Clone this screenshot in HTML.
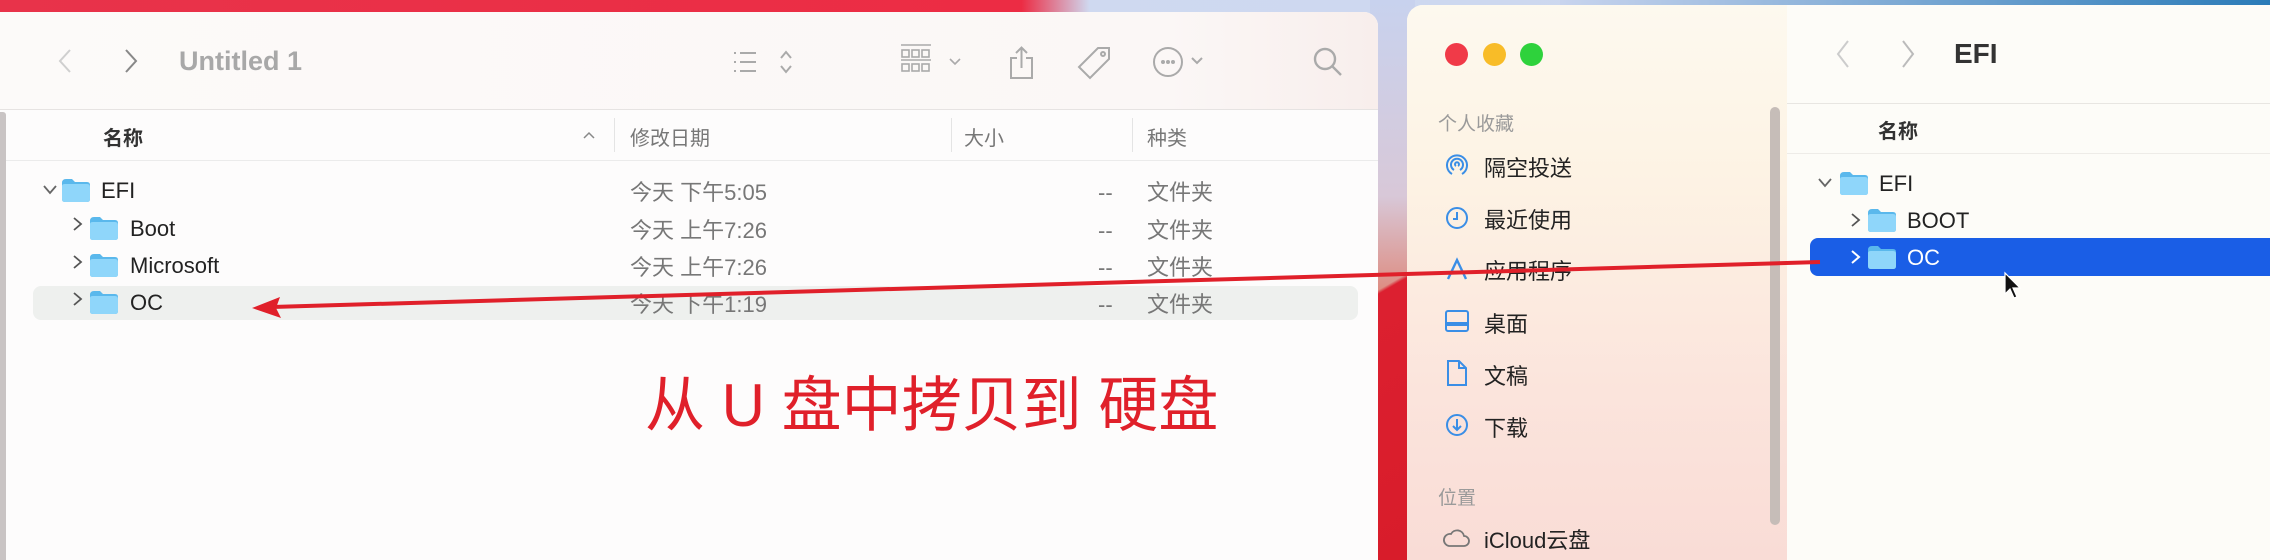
<!DOCTYPE html>
<html><head><meta charset="utf-8"><style>
*{margin:0;padding:0;box-sizing:border-box}
html,body{width:2270px;height:560px;overflow:hidden}
#w{position:relative;width:2270px;height:560px;overflow:hidden;font-family:"Liberation Sans","Noto Sans CJK SC",sans-serif;background:linear-gradient(90deg,#e8334a 0%,#ec2c44 45%,#cfd9f0 48%,#c9d6ee 100%)}
.a{position:absolute;white-space:nowrap}
.t{font-size:22px;color:#222}
.g{color:#777}
svg{position:absolute;overflow:visible}
</style></head><body><div id="w">
<div class="a" style="left:1370px;top:0;width:45px;height:560px;background:linear-gradient(180deg,#c8d2ee 0%,#d8c8d8 35%,#e07058 60%,#e02838 75%,#d8202c 100%)"></div>
<div class="a" style="left:1370px;top:170px;width:45px;height:390px;background:linear-gradient(150deg,transparent 0 30%,#dc2030 31%,#d81c2a 100%)"></div>
<div class="a" style="left:1560px;top:0;width:710px;height:10px;background:linear-gradient(90deg,#c8d4ee,#2a7bb8)"></div>

<div class="a" style="left:-20px;top:12px;width:1398px;height:548px;background:#fdfcfc;border-radius:14px 14px 0 0;overflow:hidden">
  <div class="a" style="left:0;top:0;width:1398px;height:98px;background:linear-gradient(90deg,#fcfaf9,#fbf7f6 85%,#f8eeec)"></div>
  <div class="a" style="left:0;top:97px;width:1398px;height:1px;background:#e6e3e2"></div>
  <div class="a" style="left:0;top:148px;width:1398px;height:1px;background:#ebebeb"></div>
</div>
<div class="a" style="left:0;top:112px;width:6px;height:448px;background:#c9c4c4;border-radius:0 3px 0 0"></div>
<svg style="left:58px;top:49px" width="14" height="24"><path d="M12 1 L2 12 L12 23" fill="none" stroke="#cfcfcf" stroke-width="2"/></svg>
<svg style="left:124px;top:49px" width="14" height="24"><path d="M2 1 L12 12 L2 23" fill="none" stroke="#888" stroke-width="2"/></svg>
<div class="a" style="left:179px;top:46px;font-size:27px;font-weight:bold;color:#a8a8a8">Untitled 1</div>
<svg style="left:732px;top:50px" width="60" height="24" fill="none" stroke="#aaa" stroke-width="2"><path d="M2 3h2M8 3h16M2 12h2M8 12h16M2 21h2M8 21h16M49 8l5-6 5 6M49 16l5 6 5-6"/></svg>
<svg style="left:900px;top:44px" width="70" height="34" fill="none" stroke="#aaa" stroke-width="1.6"><path d="M1 1h30"/><rect x="2" y="6" width="7" height="7"/><rect x="12" y="6" width="7" height="7"/><rect x="22" y="6" width="7" height="7"/><path d="M1 16h30"/><rect x="2" y="20" width="7" height="7"/><rect x="12" y="20" width="7" height="7"/><rect x="22" y="20" width="7" height="7"/><path d="M50 15l5 5 5-5"/></svg>
<svg style="left:1008px;top:46px" width="28" height="34" fill="none" stroke="#aaa" stroke-width="2"><path d="M9 12H3v20h21V12h-6M13.5 2v20M8 7l5.5-5.5L19 7"/></svg>
<svg style="left:1076px;top:46px" width="36" height="36" fill="none" stroke="#aaa" stroke-width="2"><path d="M22 2h11v11L14 32 3 21z"/><circle cx="27" cy="8" r="2"/></svg>
<svg style="left:1152px;top:46px" width="60" height="32" fill="none" stroke="#aaa" stroke-width="2"><circle cx="16" cy="16" r="14"/><path d="M40 12l5 5 5-5"/><circle cx="11" cy="16" r="1" fill="#999"/><circle cx="16" cy="16" r="1" fill="#999"/><circle cx="21" cy="16" r="1" fill="#999"/></svg>
<svg style="left:1312px;top:46px" width="32" height="32" fill="none" stroke="#aaa" stroke-width="2.4"><circle cx="13" cy="13" r="10"/><path d="M20 20l9 9"/></svg>
<div class="a" style="left:103px;top:122px;font-size:20px;font-weight:bold;color:#333">名称</div>
<svg style="left:583px;top:131px" width="12" height="8"><path d="M1 7l5-5 5 5" fill="none" stroke="#888" stroke-width="1.5"/></svg>
<div class="a" style="left:614px;top:118px;width:1px;height:34px;background:#e4e4e4"></div>
<div class="a" style="left:630px;top:122px;font-size:20px;color:#777">修改日期</div>
<div class="a" style="left:951px;top:118px;width:1px;height:34px;background:#e4e4e4"></div>
<div class="a" style="left:964px;top:122px;font-size:20px;color:#777">大小</div>
<div class="a" style="left:1132px;top:118px;width:1px;height:34px;background:#e4e4e4"></div>
<div class="a" style="left:1147px;top:122px;font-size:20px;color:#777">种类</div>
<div class="a" style="left:33px;top:286px;width:1325px;height:34px;background:#eef0ee;border-radius:8px"></div>
<svg width="0" height="0"><defs><g id="f"><path d="M0 5 Q0 1 4 1 H10 L13 4 H25 Q28 4 28 7 V21 Q28 24 25 24 H3 Q0 24 0 21Z" fill="#5ab8ec"/><path d="M0 8 Q0 6 3 6 H25 Q28 6 28 9 V21 Q28 24 25 24 H3 Q0 24 0 21Z" fill="#8fd6fa"/></g></defs></svg>
<svg style="left:43px;top:185px" width="14" height="10"><path d="M1 1l6 7 6-7" fill="none" stroke="#666" stroke-width="1.8"/></svg>
<svg style="left:62px;top:178px" width="28" height="26"><use href="#f"/></svg>
<div class="a t" style="left:101px;top:178px">EFI</div>
<svg style="left:73px;top:217px" width="10" height="14"><path d="M1 1l7 6-7 6" fill="none" stroke="#555" stroke-width="1.8"/></svg>
<svg style="left:90px;top:216px" width="28" height="26"><use href="#f"/></svg>
<div class="a t" style="left:130px;top:216px">Boot</div>
<svg style="left:73px;top:255px" width="10" height="14"><path d="M1 1l7 6-7 6" fill="none" stroke="#555" stroke-width="1.8"/></svg>
<svg style="left:90px;top:253px" width="28" height="26"><use href="#f"/></svg>
<div class="a t" style="left:130px;top:253px">Microsoft</div>
<svg style="left:73px;top:292px" width="10" height="14"><path d="M1 1l7 6-7 6" fill="none" stroke="#555" stroke-width="1.8"/></svg>
<svg style="left:90px;top:290px" width="28" height="26"><use href="#f"/></svg>
<div class="a t" style="left:130px;top:290px">OC</div>
<div class="a t g" style="left:630px;top:175px">今天 下午5:05</div>
<div class="a t g" style="left:630px;top:213px">今天 上午7:26</div>
<div class="a t g" style="left:630px;top:250px">今天 上午7:26</div>
<div class="a t g" style="left:630px;top:287px">今天 下午1:19</div>
<div class="a t g" style="left:1098px;top:180px">--</div><div class="a t g" style="left:1098px;top:218px">--</div><div class="a t g" style="left:1098px;top:255px">--</div><div class="a t g" style="left:1098px;top:292px">--</div>
<div class="a t g" style="left:1147px;top:175px">文件夹</div><div class="a t g" style="left:1147px;top:213px">文件夹</div><div class="a t g" style="left:1147px;top:250px">文件夹</div><div class="a t g" style="left:1147px;top:287px">文件夹</div>
<div class="a" style="left:645px;top:357px;font-size:60px;color:#e0202a">从 U 盘中拷贝到 硬盘</div>

<div class="a" style="left:1407px;top:5px;width:863px;height:555px;border-radius:16px 0 0 0;overflow:hidden;background:#fdfcf8">
  <div class="a" style="left:0;top:0;width:380px;height:555px;background:linear-gradient(180deg,#fdf9ef 0%,#fdf3e4 30%,#fbe4dc 70%,#f9dcd6 100%)"></div>
  <div class="a" style="left:380px;top:98px;width:600px;height:1px;background:#e8e6e2"></div>
  <div class="a" style="left:380px;top:148px;width:600px;height:1px;background:#eeece8"></div>
</div>
<div class="a" style="left:1445px;top:43px;width:23px;height:23px;border-radius:50%;background:#f03a48"></div>
<div class="a" style="left:1483px;top:43px;width:23px;height:23px;border-radius:50%;background:#f8bc28"></div>
<div class="a" style="left:1520px;top:43px;width:23px;height:23px;border-radius:50%;background:#2ed23c"></div>
<div class="a" style="left:1770px;top:107px;width:10px;height:418px;border-radius:5px;background:#c6bdb8"></div>
<div class="a" style="left:1438px;top:109px;font-size:19px;color:#9a9a9a">个人收藏</div>
<div class="a t" style="left:1484px;top:151px">隔空投送</div>
<div class="a t" style="left:1484px;top:203px">最近使用</div>
<div class="a t" style="left:1484px;top:254px">应用程序</div>
<div class="a t" style="left:1484px;top:307px">桌面</div>
<div class="a t" style="left:1484px;top:359px">文稿</div>
<div class="a t" style="left:1484px;top:411px">下载</div>
<div class="a" style="left:1438px;top:483px;font-size:19px;color:#9a9a9a">位置</div>
<div class="a t" style="left:1484px;top:523px">iCloud云盘</div>
<svg style="left:1445px;top:153px" width="24" height="24" fill="none" stroke="#3a8ee6" stroke-width="2"><path d="M7 21A10 10 0 1 1 17 21M9 17A6 6 0 1 1 15 17M11 13a2 2 0 1 1 2 0"/></svg>
<svg style="left:1445px;top:206px" width="24" height="24" fill="none" stroke="#3a8ee6" stroke-width="2"><circle cx="12" cy="12" r="10"/><path d="M12 6v7h-4"/></svg>
<svg style="left:1445px;top:257px" width="24" height="24" fill="none" stroke="#3a8ee6" stroke-width="2.4"><path d="M3 22L12 3 21 22M6 15h12"/></svg>
<svg style="left:1445px;top:310px" width="24" height="22" fill="none" stroke="#3a8ee6" stroke-width="2"><rect x="1" y="1" width="22" height="20" rx="2"/><path d="M1 14h22" stroke-width="4"/></svg>
<svg style="left:1447px;top:360px" width="20" height="26" fill="none" stroke="#3a8ee6" stroke-width="2"><path d="M1 1h11l7 7v17H1zM12 1v7h7"/></svg>
<svg style="left:1445px;top:413px" width="24" height="24" fill="none" stroke="#3a8ee6" stroke-width="2"><circle cx="12" cy="12" r="10"/><path d="M12 6v11M8 13l4 4 4-4"/></svg>
<svg style="left:1442px;top:527px" width="28" height="20" fill="none" stroke="#777" stroke-width="1.8"><path d="M7 19H22a5 5 0 0 0 0-10 7 7 0 0 0-13-2 6 6 0 0 0-2 12z"/></svg>
<svg style="left:1836px;top:40px" width="14" height="28"><path d="M12 1 L2 14 L12 27" fill="none" stroke="#ccc" stroke-width="2"/></svg>
<svg style="left:1901px;top:40px" width="14" height="28"><path d="M2 1 L12 14 L2 27" fill="none" stroke="#bbb" stroke-width="2"/></svg>
<div class="a" style="left:1954px;top:38px;font-size:28px;font-weight:bold;color:#333">EFI</div>
<div class="a" style="left:1878px;top:115px;font-size:20px;font-weight:bold;color:#333">名称</div>
<svg style="left:1818px;top:178px" width="14" height="10"><path d="M1 1l6 7 6-7" fill="none" stroke="#666" stroke-width="1.8"/></svg>
<svg style="left:1840px;top:171px" width="28" height="26"><use href="#f"/></svg>
<div class="a t" style="left:1879px;top:171px">EFI</div>
<svg style="left:1851px;top:213px" width="10" height="14"><path d="M1 1l7 6-7 6" fill="none" stroke="#555" stroke-width="1.8"/></svg>
<svg style="left:1868px;top:208px" width="28" height="26"><use href="#f"/></svg>
<div class="a t" style="left:1907px;top:208px">BOOT</div>
<div class="a" style="left:1810px;top:238px;width:460px;height:38px;background:#1a5ee6;border-radius:8px 0 0 8px"></div>
<svg style="left:1851px;top:250px" width="10" height="14"><path d="M1 1l7 6-7 6" fill="none" stroke="#fff" stroke-width="2"/></svg>
<svg style="left:1868px;top:245px" width="28" height="26"><use href="#f"/></svg>
<div class="a t" style="left:1907px;top:245px;color:#fff">OC</div>
<svg style="left:2004px;top:272px" width="20" height="30"><path d="M1 1V22L6 17L10 26L13 25L9 16H16Z" fill="#111" stroke="#fff" stroke-width="1.2"/></svg>
<svg style="left:0;top:0" width="2270" height="560"><path d="M1820 262 L272 307" stroke="#e0202a" stroke-width="4" fill="none"/><path d="M252 308 L280 297 L276 308 L281 318Z" fill="#e0202a"/></svg>
</div></body></html>
